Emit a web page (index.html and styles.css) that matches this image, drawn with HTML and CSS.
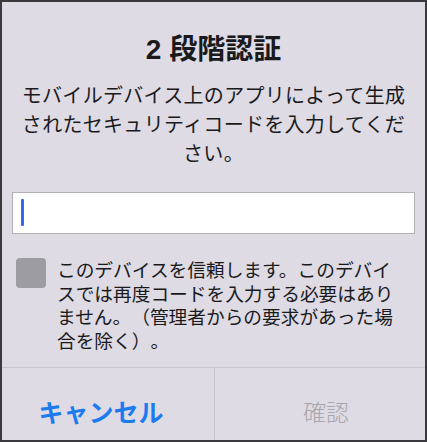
FILE: index.html
```html
<!DOCTYPE html>
<html lang="ja">
<head>
  <meta charset="UTF-8">
  <meta name="viewport" content="width=device-width, initial-scale=1.0">
  <title>2 段階認証</title>
  <link rel="stylesheet" href="styles.css">
</head>
<body>
  <div class="alert">
    <div class="content">
      <h1 class="title">2 段階認証</h1>
      <p class="message">モバイルデバイス上のアプリによって生成されたセキュリティコードを入力してください。</p>
      <div class="field">
        <span class="caret"></span>
      </div>
      <label class="trust">
        <span class="box"></span>
        <span class="trust-text">このデバイスを信頼します。このデバイスでは再度コードを入力する必要はありません。（管理者からの要求があった場合を除く）。</span>
      </label>
    </div>
    <div class="actions">
      <button class="action cancel">キャンセル</button>
      <button class="action confirm" disabled>確認</button>
    </div>
  </div>
</body>
</html>
```

FILE: styles.css
```css
:root {
  --bg: #dedbe4;
  --frame: #3a393d;
  --text: #1a1a1c;
  --line: #c9c6ce;
  --blue: #1d7bf0;
  --muted: #a9a7ad;
}
* { box-sizing: border-box; }
body {
  margin: 0;
  font-family: "Noto Sans CJK JP", "Liberation Sans", sans-serif;
  text-spacing-trim: space-all;
  background: var(--frame);
}
.alert {
  width: 427px;
  height: 442px;
  border: 2px solid var(--frame);
  background: var(--bg);
  display: flex;
  flex-direction: column;
}
.content {
  flex: 1;
  padding: 30px 10px 0;
  display: flex;
  flex-direction: column;
}
.title {
  margin: 0;
  text-align: center;
  font-family: "Liberation Sans", "Noto Sans CJK JP", sans-serif;
  font-size: 28px;
  font-weight: bold;
  line-height: 36px;
  color: var(--text);
}
.message {
  margin: 12px 8px 0;
  text-align: center;
  font-size: 20px;
  letter-spacing: 0.3px;
  line-height: 29px;
  color: var(--text);
}
.field {
  margin: 25px 0 0;
  height: 42px;
  background: #fff;
  border: 1px solid #b3b1b8;
  padding: 6px 8px;
  display: flex;
}
.caret {
  width: 3px;
  height: 27px;
  border-radius: 1px;
  background: #3a66ee;
}
.trust {
  margin-top: 24px;
  display: flex;
  gap: 11px;
  padding-left: 4px;
  padding-right: 8px;
}
.box {
  flex: none;
  width: 30px;
  height: 30px;
  border-radius: 4px;
  background: #9e9ca3;
}
.trust-text {
  font-size: 18.7px;
  line-height: 23.5px;
  margin-top: -1px;
  color: var(--text);
}
.actions {
  height: 73px;
  display: flex;
  border-top: 1px solid var(--line);
}
.action {
  flex: 1;
  border: none;
  background: none;
  font-family: inherit;
  font-weight: normal;
  padding: 14px 0 0;
}
.cancel {
  color: var(--blue);
  font-size: 25px;
  font-weight: bold;
  padding-right: 14px;
  border-right: 1px solid var(--line);
}
.confirm {
  color: var(--muted);
  font-size: 23px;
  font-weight: 300;
  padding-left: 12px;
}
```
